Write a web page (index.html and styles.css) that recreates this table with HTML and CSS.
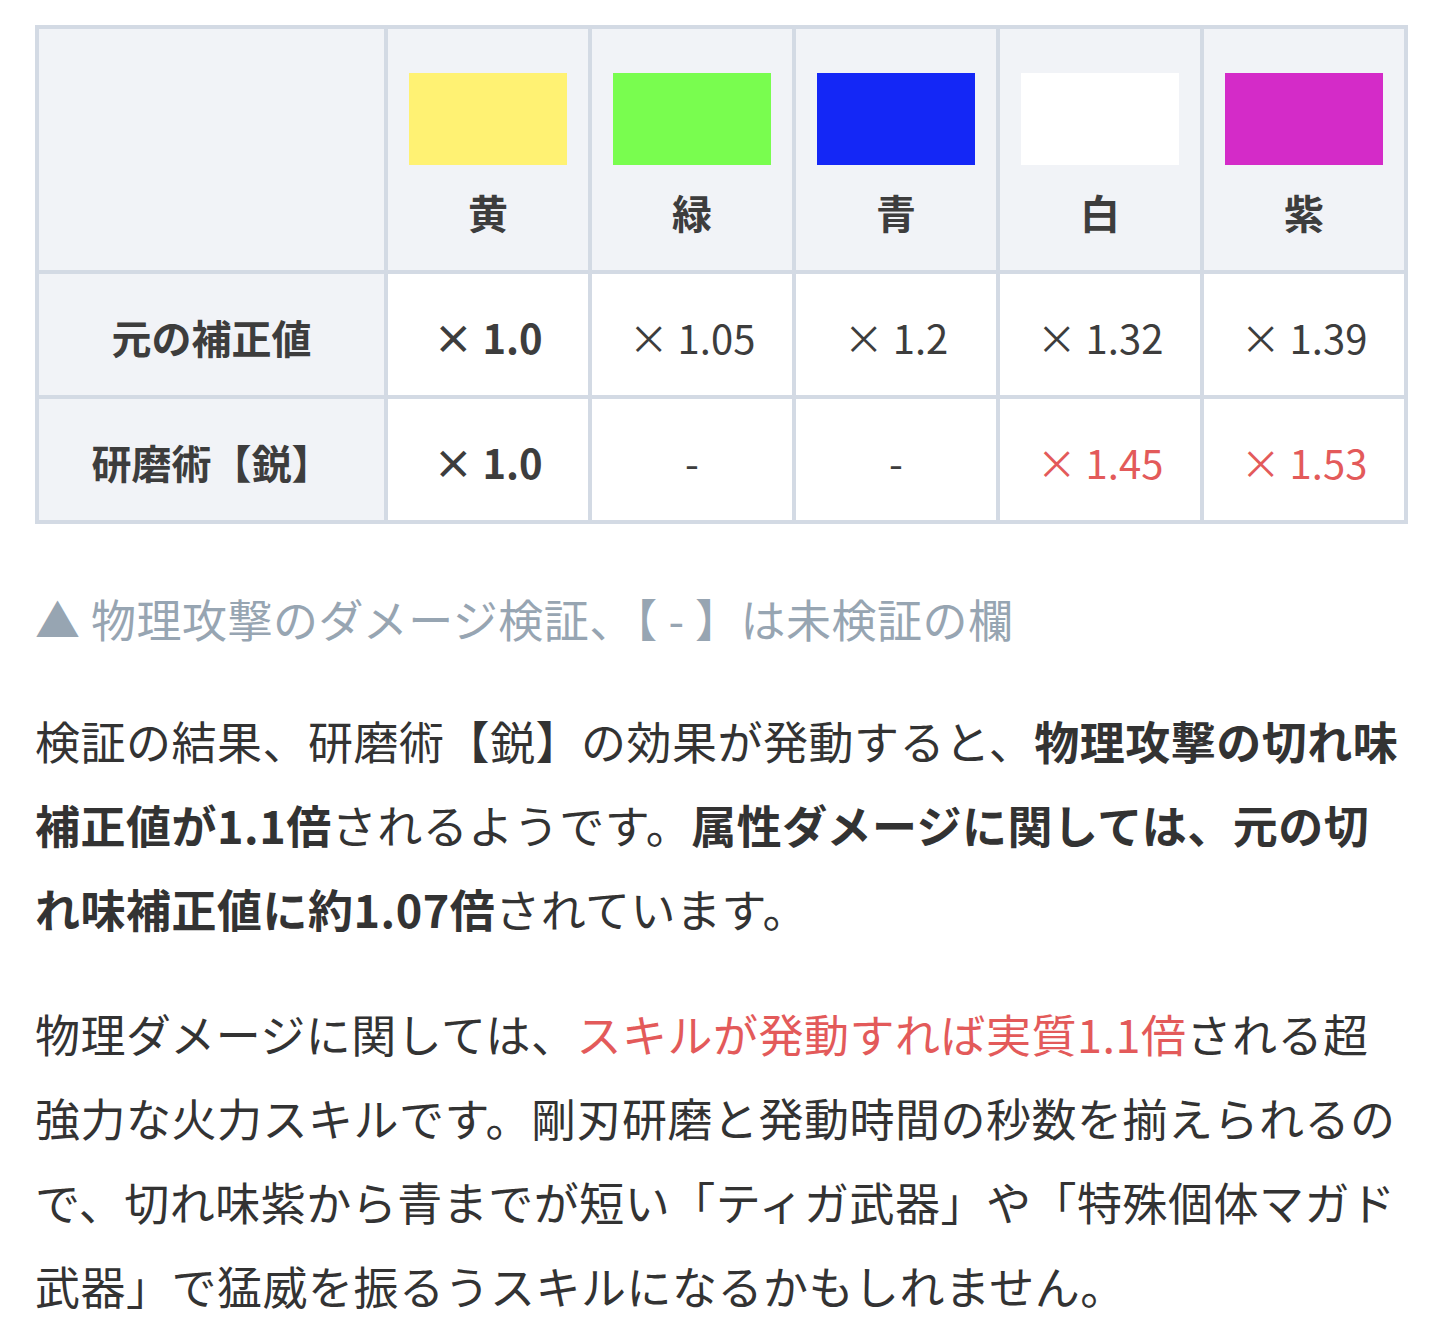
FILE: index.html
```html
<!DOCTYPE html>
<html lang="ja">
<head>
<meta charset="utf-8">
<link rel="stylesheet" href="styles.css">
</head>
<body>
<main class="article">
  <table class="sharp-table">
    <colgroup>
      <col class="col-head">
      <col class="col-val"><col class="col-val"><col class="col-val"><col class="col-val"><col class="col-val">
    </colgroup>
    <thead>
      <tr class="row-colors">
        <th class="cell-corner"></th>
        <th class="cell-color"><span class="swatch swatch-yellow"></span><span class="color-name">黄</span></th>
        <th class="cell-color"><span class="swatch swatch-green"></span><span class="color-name">緑</span></th>
        <th class="cell-color"><span class="swatch swatch-blue"></span><span class="color-name">青</span></th>
        <th class="cell-color"><span class="swatch swatch-white"></span><span class="color-name">白</span></th>
        <th class="cell-color"><span class="swatch swatch-purple"></span><span class="color-name">紫</span></th>
      </tr>
    </thead>
    <tbody>
      <tr class="row-data">
        <th class="cell-label">元の補正値</th>
        <td class="cell-val strong">× 1.0</td>
        <td class="cell-val">× 1.05</td>
        <td class="cell-val">× 1.2</td>
        <td class="cell-val">× 1.32</td>
        <td class="cell-val">× 1.39</td>
      </tr>
      <tr class="row-data">
        <th class="cell-label">研磨術【鋭】</th>
        <td class="cell-val strong">× 1.0</td>
        <td class="cell-val">-</td>
        <td class="cell-val">-</td>
        <td class="cell-val red">× 1.45</td>
        <td class="cell-val red">× 1.53</td>
      </tr>
    </tbody>
  </table>

  <p class="caption">▲ 物理攻撃のダメージ検証、【 - 】は未検証の欄</p>

  <p class="text">検証の結果、研磨術【鋭】の効果が発動すると、<b>物理攻撃の切れ味補正値が1.1倍</b>されるようです。<b>属性ダメージに関しては、元の切れ味補正値に約1.07倍</b>されています。</p>

  <p class="text">物理ダメージに関しては、<span class="red">スキルが発動すれば実質1.1倍</span>される超強力な火力スキルです。剛刃研磨と発動時間の秒数を揃えられるので、切れ味紫から青までが短い「ティガ武器」や「特殊個体マガド武器」で猛威を振るうスキルになるかもしれません。</p>
</main>
</body>
</html>
```

FILE: styles.css
```css
html, body {
  margin: 0;
  padding: 0;
  background: #ffffff;
}

body {
  font-family: "Noto Sans CJK JP", "Noto Sans", sans-serif;
  color: #333333;
}

.article {
  padding: 25px 33px 0 35px;
}

.sharp-table {
  table-layout: fixed;
  width: 1373px;
  border-collapse: separate;
  border-spacing: 4px;
  background: #d3dae4;
  font-size: 40px;
  color: #3d3d3d;
}

.col-head { width: 345px; }
.col-val { width: 200px; }

.sharp-table th,
.sharp-table td {
  box-sizing: border-box;
  padding: 0;
  text-align: center;
  vertical-align: middle;
}

.row-colors th {
  background: #f1f3f7;
  height: 241px;
  padding: 44px 0 26px;
}

.swatch {
  display: block;
  width: 158px;
  height: 92px;
  margin: 0 auto 16px;
}

.swatch-yellow { background: #fff273; }
.swatch-green { background: #79fd4f; }
.swatch-blue { background: #1427f6; }
.swatch-white { background: #ffffff; }
.swatch-purple { background: #d42bc8; }

.color-name {
  display: block;
  line-height: 63px;
  font-weight: 700;
}

.row-data th,
.row-data td {
  height: 121px;
  padding-top: 6px;
  line-height: 63px;
}

.cell-label {
  background: #f1f3f7;
  font-weight: 700;
}

.cell-val {
  background: #ffffff;
  font-weight: 400;
}

.cell-val.strong {
  font-weight: 700;
}

.red {
  color: #e35a5a;
}

.caption {
  margin: 53px 0 0;
  font-size: 45px;
  line-height: 84px;
  letter-spacing: 0.5px;
  color: #97a5b2;
}

.text {
  margin: 38px 0 0;
  font-size: 45px;
  line-height: 84px;
  letter-spacing: 0.5px;
}

.text + .text {
  margin-top: 41px;
}

.text b {
  font-weight: 700;
}
```
